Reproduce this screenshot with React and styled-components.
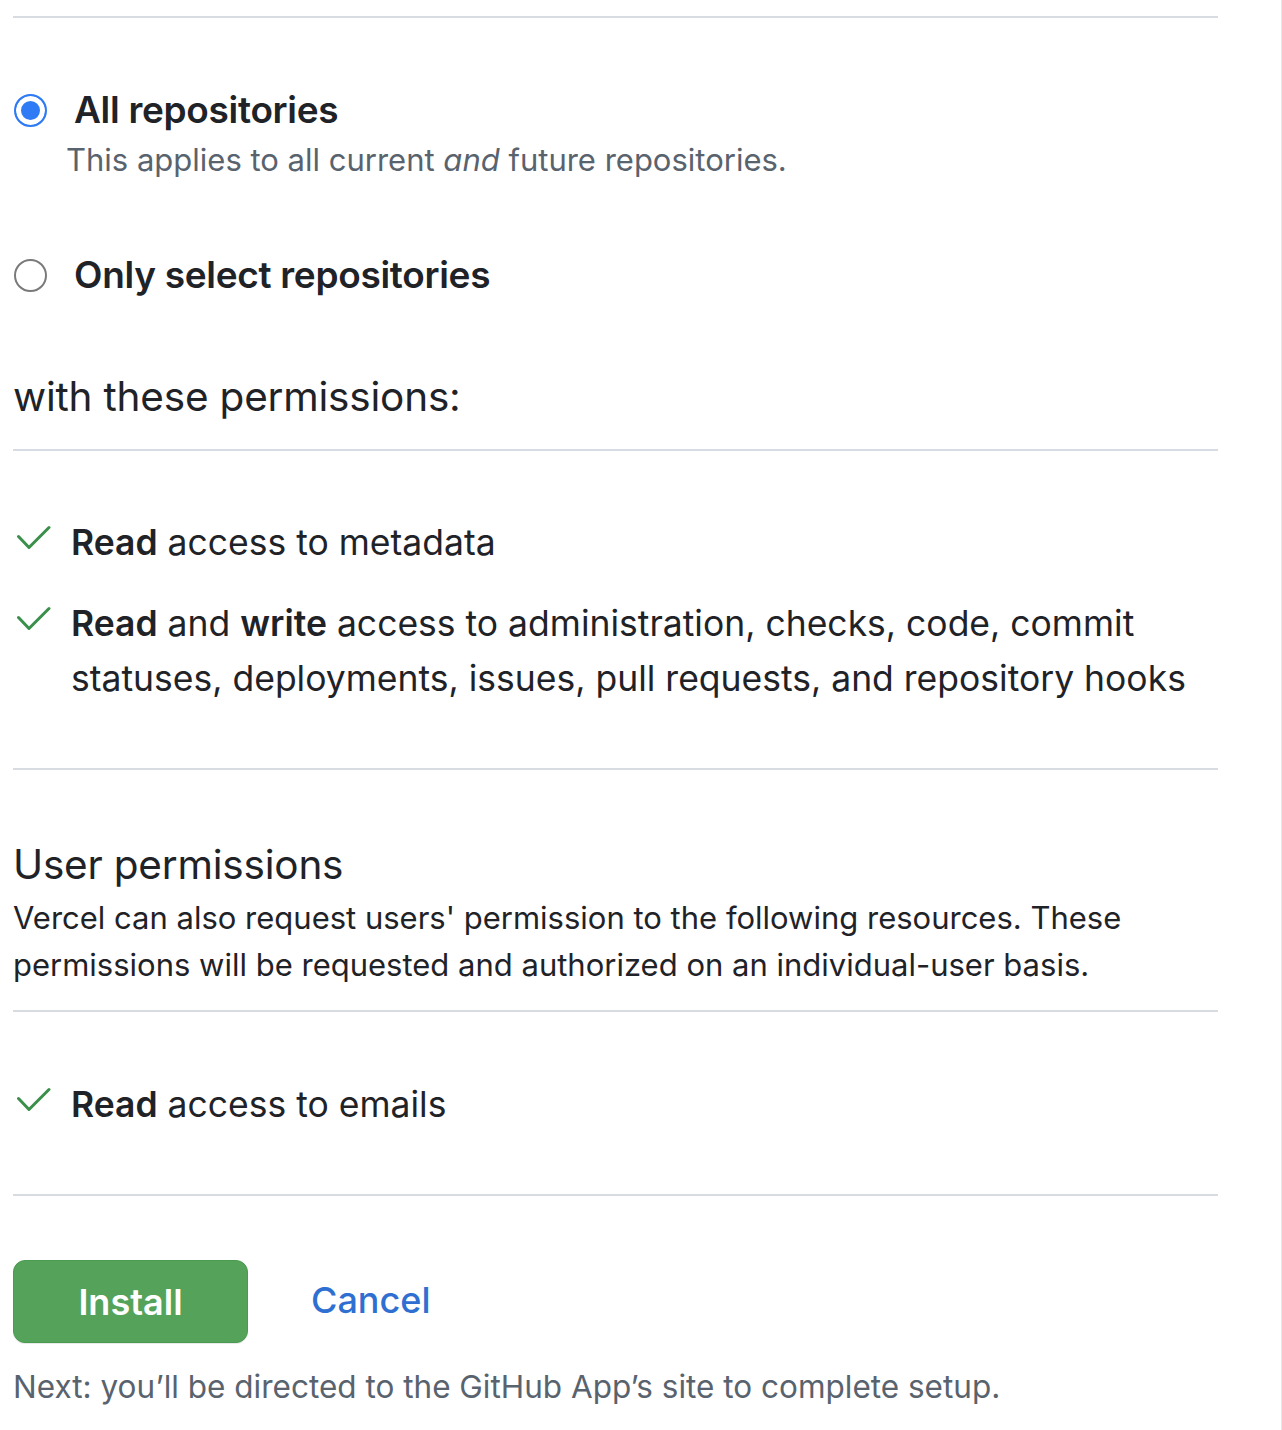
import React from "react";
import styled, { createGlobalStyle } from "styled-components";

const GlobalStyle = createGlobalStyle`
  html, body {
    margin: 0;
    padding: 0;
    background: #ffffff;
  }
  body {
    font-family: Inter, "Noto Sans", "Liberation Sans", sans-serif;
    color: #1f2328;
  }
`;

const Page = styled.div`
  width: 1281px;
  min-height: 1430px;
  border-right: 1px solid #e8e8e8;
`;

const Column = styled.div`
  width: 1205px;
  padding-left: 13px;
  padding-top: 16px;
`;

const Rule = styled.hr`
  margin: 0;
  border: 0;
  height: 2px;
  background: #d6dce2;
  margin-top: ${(p) => p.$top || 0}px;
`;

const RadioGroup = styled.div`
  display: flex;
  flex-direction: column;
`;

const RadioOption = styled.label`
  display: flex;
  flex-direction: column;
  margin-top: ${(p) => p.$top}px;
`;

const RadioRow = styled.div`
  display: flex;
  align-items: center;
  gap: 27px;
  height: 48px;
`;

const RadioDot = styled.span`
  width: 33px;
  height: 33px;
  margin-left: 1px;
  border-radius: 50%;
  box-sizing: border-box;
  flex: none;
  ${(p) =>
    p.$checked
      ? `
    border: 2px solid #2f7bf5;
    background: #2f7bf5;
    box-shadow: inset 0 0 0 5px #ffffff;
  `
      : `
    border: 2px solid #7a7a7a;
    background: #ffffff;
  `}
`;

const RadioLabel = styled.span`
  font-size: 37px;
  font-weight: 600;
  line-height: 48px;
  letter-spacing: -0.3px;
`;

const RadioNote = styled.div`
  margin-top: 6px;
  padding-left: 53px;
  font-size: 31px;
  line-height: 40px;
  color: #59636e;
`;

const SectionTitle = styled.h2`
  margin: ${(p) => p.$top}px 0 0;
  font-size: ${(p) => p.$size}px;
  font-weight: 400;
  line-height: ${(p) => p.$lh}px;
  letter-spacing: -0.2px;
`;

const Description = styled.p`
  margin: 4px 0 0;
  font-size: 31px;
  line-height: 47px;
  max-width: 1205px;
`;

const PermissionList = styled.ul`
  list-style: none;
  margin: ${(p) => p.$top}px 0 0;
  padding: 0;
  display: flex;
  flex-direction: column;
  gap: 26px;
`;

const PermissionItem = styled.li`
  display: flex;
  align-items: flex-start;
  gap: 20px;
  font-size: 35.5px;
  line-height: 55px;
`;

const CheckMark = styled.svg`
  flex: none;
  width: 36px;
  height: 55px;
  margin-left: 2px;
`;

const Strong = styled.strong`
  font-weight: 600;
`;

const Actions = styled.div`
  display: flex;
  align-items: center;
  gap: 63px;
  margin-top: 64px;
`;

const InstallButton = styled.button`
  width: 235px;
  height: 83px;
  border-radius: 12px;
  border: 1px solid #4a9a4f;
  background: #55a35a;
  color: #ffffff;
  font-family: inherit;
  font-size: 36px;
  font-weight: 600;
  box-shadow: 0 1px 0 rgba(31, 35, 40, 0.1);
  cursor: pointer;
`;

const CancelLink = styled.a`
  color: #2f6fd1;
  font-size: 36px;
  font-weight: 500;
  text-decoration: none;
  margin-top: -4px;
`;

const Footnote = styled.p`
  margin: 24px 0 0;
  font-size: 31.5px;
  line-height: 40px;
  color: #59636e;
`;

const Check = () => (
  <CheckMark viewBox="0 0 36 55">
    <polyline
      points="3.5,21.5 14,32.5 34,12.5"
      fill="none"
      stroke="#3a8f4a"
      strokeWidth="3"
      strokeLinecap="round"
      strokeLinejoin="round"
    />
  </CheckMark>
);

export default function App() {
  return (
    <>
      <GlobalStyle />
      <Page>
        <Column>
          <Rule />
          <RadioGroup>
            <RadioOption $top={68}>
              <RadioRow>
                <RadioDot $checked />
                <RadioLabel>All repositories</RadioLabel>
              </RadioRow>
              <RadioNote>
                This applies to all current <em>and</em> future repositories.
              </RadioNote>
            </RadioOption>
            <RadioOption $top={71}>
              <RadioRow>
                <RadioDot />
                <RadioLabel>Only select repositories</RadioLabel>
              </RadioRow>
            </RadioOption>
          </RadioGroup>

          <SectionTitle $top={74} $size={40.5} $lh={48}>
            with these permissions:
          </SectionTitle>
          <Rule $top={28} />

          <PermissionList $top={64}>
            <PermissionItem>
              <Check />
              <span>
                <Strong>Read</Strong> access to metadata
              </span>
            </PermissionItem>
            <PermissionItem>
              <Check />
              <span>
                <Strong>Read</Strong> and <Strong>write</Strong> access to
                administration, checks, code, commit statuses, deployments,
                issues, pull requests, and repository hooks
              </span>
            </PermissionItem>
          </PermissionList>
          <Rule $top={62} />

          <SectionTitle $top={70} $size={40.5} $lh={50}>
            User permissions
          </SectionTitle>
          <Description>
            Vercel can also request users' permission to the following
            resources. These permissions will be requested and authorized on
            an individual-user basis.
          </Description>
          <Rule $top={22} />

          <PermissionList $top={65}>
            <PermissionItem>
              <Check />
              <span>
                <Strong>Read</Strong> access to emails
              </span>
            </PermissionItem>
          </PermissionList>
          <Rule $top={62} />

          <Actions>
            <InstallButton>Install</InstallButton>
            <CancelLink href="#">Cancel</CancelLink>
          </Actions>
          <Footnote>
            Next: you’ll be directed to the GitHub App’s site to complete setup.
          </Footnote>
        </Column>
      </Page>
    </>
  );
}
